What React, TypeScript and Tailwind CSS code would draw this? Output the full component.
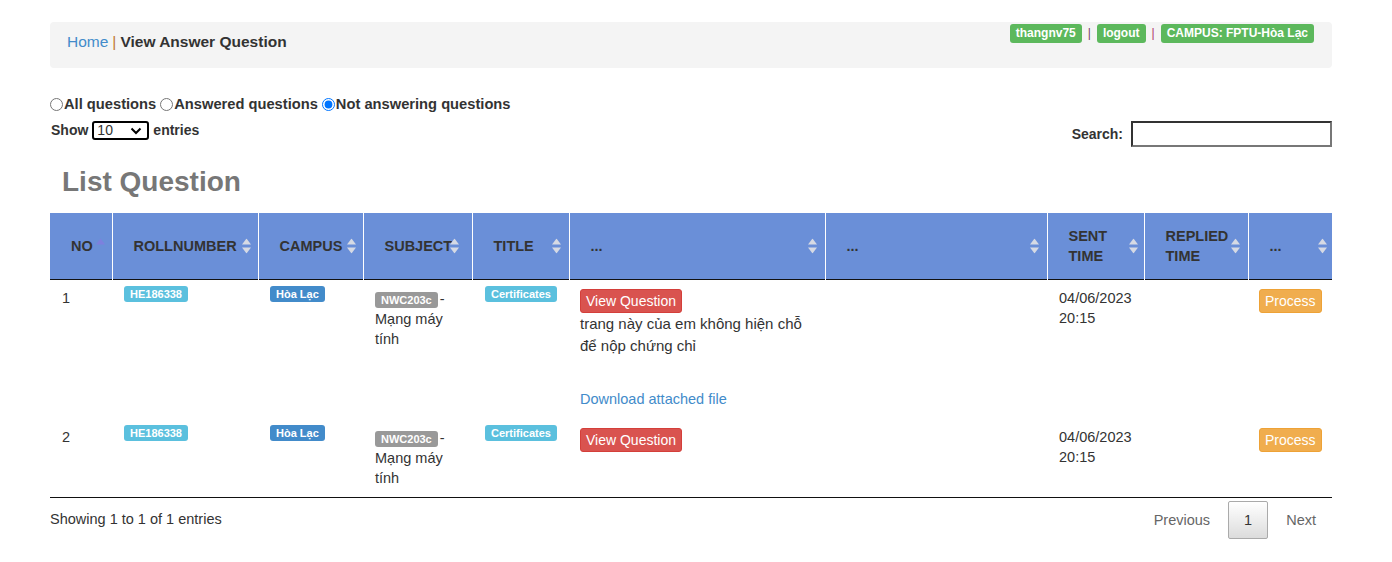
import React from 'react';

type Col = { label: React.ReactNode; w: string; icon: 'asc' | 'both'; r: string };

const cols: Col[] = [
  { label: 'NO', w: 'w-[62px]', icon: 'asc', r: 'right-[7px]' },
  { label: 'ROLLNUMBER', w: 'w-[146px]', icon: 'both', r: 'right-[7px]' },
  { label: 'CAMPUS', w: 'w-[105px]', icon: 'both', r: 'right-[7px]' },
  { label: 'SUBJECT', w: 'w-[109px]', icon: 'both', r: 'right-[13px]' },
  { label: 'TITLE', w: 'w-[97px]', icon: 'both', r: 'right-[8px]' },
  { label: '...', w: 'w-[256px]', icon: 'both', r: 'right-[8px]' },
  { label: '...', w: 'w-[222px]', icon: 'both', r: 'right-[8px]' },
  { label: 'SENT TIME', w: 'w-[97px]', icon: 'both', r: 'right-[6px]' },
  { label: 'REPLIED TIME', w: 'w-[104px]', icon: 'both', r: 'right-[8px]' },
  { label: '...', w: 'w-[84px]', icon: 'both', r: 'right-[5px]' },
];

const SortIcon = ({ kind, className }: { kind: 'asc' | 'both'; className: string }) => (
  <svg
    width="9"
    height="15"
    viewBox="0 0 9 15"
    className={`absolute top-1/2 -translate-y-1/2 ${className}`}
  >
    {kind === 'asc' ? (
      <path d="M4.5 0 L9 6 H0Z" fill="#7d80de" />
    ) : (
      <>
        <path d="M4.5 0 L9 6 H0Z" fill="#d6dae4" />
        <path d="M0 9 H9 L4.5 15Z" fill="#d6dae4" />
      </>
    )}
  </svg>
);

const Label = ({ children, color, top }: { children: React.ReactNode; color: string; top?: boolean }) => (
  <span
    className={`inline-block rounded-[3px] px-[6px] text-[11px] font-bold leading-4 text-white ${color} ${
      top ? 'align-top' : 'mr-[2px]'
    }`}
  >
    {children}
  </span>
);

const RedBtn = () => (
  <span className="inline-block rounded-[3px] border border-[#d43f3a] bg-[#d9534f] px-[5px] py-px text-[14px] leading-5 text-white">
    View Question
  </span>
);

const ProcessBtn = () => (
  <span className="inline-block rounded-[3px] border border-[#eea236] bg-[#f0ad4e] px-[5px] py-px text-[14px] leading-5 text-white">
    Process
  </span>
);

const rows = [
  {
    no: 1,
    desc: 'trang này của em không hiện chỗ để nộp chứng chỉ',
    file: true,
  },
  { no: 2, desc: '', file: false },
];

export default function App() {
  return (
    <div className="min-h-[562px] bg-white font-['Liberation_Sans',Arial,sans-serif] text-[#333]">
      <div className="ml-[50px] w-[1282px] pt-[22px]">
        {/* breadcrumb bar */}
        <div className="flex h-[46px] justify-between rounded-[4px] bg-[#f4f4f4] pl-[17px] pr-[18px]">
          <div className="flex items-center pb-[6px] text-[15.5px] leading-5">
            <span className="text-[#428bca]">Home</span>
            <span className="mx-[4px] text-[#c0792f]">|</span>
            <span className="font-bold text-[#333]">View Answer Question</span>
          </div>
          <div className="flex items-start gap-[6px] pt-[2px] text-[12px] font-bold leading-[19px]">
            <span className="rounded-[3px] bg-[#5cb85c] px-[6px] text-white">thangnv75</span>
            <span className="font-normal text-[#7a3a6a]">|</span>
            <span className="rounded-[3px] bg-[#5cb85c] px-[6px] text-white">logout</span>
            <span className="font-normal text-[#b0306a]">|</span>
            <span className="rounded-[3px] bg-[#5cb85c] px-[6px] text-white">CAMPUS: FPTU-Hòa Lạc</span>
          </div>
        </div>

        {/* filter radios */}
        <div className="mt-[26px] flex h-5 items-center text-[14.7px] font-bold leading-5 text-[#333]">
          <label className="flex items-center">
            <input type="radio" name="filter" className="m-0 mr-px h-[13px] w-[13px]" />
            All questions
          </label>
          <label className="ml-[4px] flex items-center">
            <input type="radio" name="filter" className="m-0 mr-px h-[13px] w-[13px]" />
            Answered questions
          </label>
          <label className="ml-[4px] flex items-center">
            <input type="radio" name="filter" defaultChecked className="m-0 mr-px h-[13px] w-[13px]" />
            Not answering questions
          </label>
        </div>

        {/* length + search */}
        <div className="mt-[7px] flex items-start justify-between">
          <div className="flex h-[19px] items-center pl-px text-[14px] font-bold">
            <span>Show</span>
            <div className="relative mx-[4px] flex h-[19px] w-[57px] items-center rounded-[3px] border-2 border-black pl-[3px] text-[14px] font-normal">
              <span>10</span>
              <svg width="12" height="8" viewBox="0 0 12 8" className="absolute right-[5px] top-1/2 -translate-y-1/2">
                <path d="M1.5 1.5 L6 6 L10.5 1.5" stroke="#000" strokeWidth="2" fill="none" />
              </svg>
            </div>
            <span>entries</span>
          </div>
          <div className="flex h-[26px] items-center gap-[8px] text-[14px] font-bold">
            <span>Search:</span>
            <input
              type="text"
              className="h-[26px] w-[201px] border-2 border-b-[#777] border-l-[#333] border-r-[#777] border-t-[#333] bg-white outline-none"
            />
          </div>
        </div>

        <h1 className="mt-[19px] pl-[12px] text-[28px] font-bold leading-8 text-[#777]">List Question</h1>

        {/* table */}
        <table className="mt-[15px] w-[1282px] table-fixed border-collapse">
          <thead>
            <tr className="border-b border-[#111] bg-[#6a8fd8]">
              {cols.map((c, i) => (
                <th
                  key={i}
                  className={`${c.w} relative border-r border-white py-[13px] pl-[21px] pr-[18px] text-left align-middle text-[14.5px] font-bold leading-5 text-[#333] last:border-r-0`}
                >
                  {c.label}
                  <SortIcon kind={c.icon} className={c.r} />
                </th>
              ))}
            </tr>
          </thead>
          <tbody className="text-[14.5px] leading-5 text-[#333]">
            {rows.map((r) => (
              <tr key={r.no} className="align-top last:border-b last:border-[#111]">
                <td className="px-[12px] pb-[10px] pt-[8px]">{r.no}</td>
                <td className="px-[12px] pb-[10px] pt-[6px]">
                  <Label color="bg-[#5bc0de]" top>
                    HE186338
                  </Label>
                </td>
                <td className="px-[12px] pb-[10px] pt-[6px]">
                  <Label color="bg-[#428bca]" top>
                    Hòa Lạc
                  </Label>
                </td>
                <td className="px-[12px] pb-[9px] pt-[9px]">
                  <Label color="bg-[#999]">NWC203c</Label>- Mạng máy tính
                </td>
                <td className="px-[12px] pb-[10px] pt-[6px] pl-[13px]">
                  <Label color="bg-[#5bc0de]" top>
                    Certificates
                  </Label>
                </td>
                <td className="pb-[10px] pl-[11px] pr-[12px] pt-[9px]">
                  <RedBtn />
                  {r.desc && <div className="text-[15px] leading-[22px]">{r.desc}</div>}
                  {r.file && (
                    <div className="mt-[32px] text-[14.5px] leading-5 text-[#428bca]">Download attached file</div>
                  )}
                </td>
                <td className="px-[12px] pb-[10px] pt-[8px]"></td>
                <td className="px-[12px] pb-[10px] pt-[8px]">
                  04/06/2023
                  <br />
                  20:15
                </td>
                <td className="px-[12px] pb-[10px] pt-[8px]"></td>
                <td className="pb-[10px] pl-[11px] pr-[4px] pt-[9px]">
                  <ProcessBtn />
                </td>
              </tr>
            ))}
          </tbody>
        </table>

        {/* footer */}
        <div className="flex items-center justify-between pt-[3px] text-[14.5px]">
          <span className="text-[#333]">Showing 1 to 1 of 1 entries</span>
          <div className="flex items-center">
            <span className="px-[16px] py-[9px] leading-5 text-[#666]">Previous</span>
            <span className="ml-[2px] rounded-[2px] border border-[#aaa] bg-gradient-to-b from-white to-[#dcdcdc] px-[15px] py-[8px] leading-5 text-[#333]">
              1
            </span>
            <span className="ml-[2px] px-[16px] py-[9px] leading-5 text-[#666]">Next</span>
          </div>
        </div>
      </div>
    </div>
  );
}
